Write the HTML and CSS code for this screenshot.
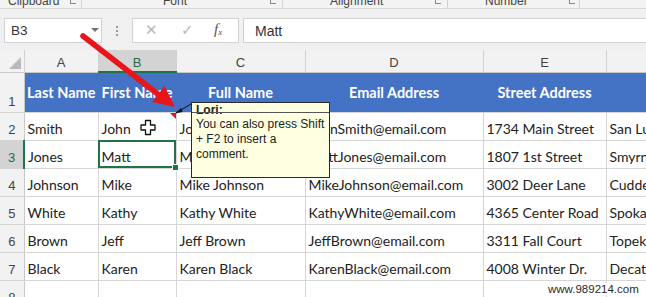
FILE: index.html
```html
<!DOCTYPE html>
<html>
<head>
<meta charset="utf-8">
<link rel="stylesheet" href="styles.css">
</head>
<body>
<div class="app">
  <div class="ribbon-labels">
    <div class="grp grp-clip"><span>Clipboard</span><i class="launch"></i></div>
    <div class="grp grp-font"><span>Font</span><i class="launch"></i></div>
    <div class="grp grp-align"><span>Alignment</span><i class="launch"></i></div>
    <div class="grp grp-num"><span>Number</span><i class="launch"></i></div>
  </div>
  <div class="formula-bar">
    <div class="name-box"><span>B3</span><i class="dd"></i></div>
    <div class="dots"><b></b><b></b><b></b></div>
    <div class="fx-buttons">
      <span class="fb-x">✕</span>
      <span class="fb-ok">✓</span>
      <span class="fb-fx">f<sub>x</sub></span>
    </div>
    <div class="formula-input">Matt</div>
  </div>
  <table class="sheet">
    <colgroup>
      <col class="c-hd"><col class="c-a"><col class="c-b"><col class="c-c"><col class="c-d"><col class="c-e"><col class="c-f">
    </colgroup>
    <tr class="r-colhd">
      <th class="corner"><i class="tri"></i></th>
      <th>A</th><th class="sel-col">B</th><th>C</th><th>D</th><th>E</th><th class="last"></th>
    </tr>
    <tr class="r-1">
      <th class="rh">1</th>
      <td>Last Name</td><td>First Name</td><td>Full Name</td><td>Email Address</td><td>Street Address</td><td></td>
    </tr>
    <tr class="r-d">
      <th class="rh">2</th>
      <td>Smith</td><td class="has-comment">John</td><td>John Smith</td><td>JohnSmith@email.com</td><td>1734 Main Street</td><td>San Luis</td>
    </tr>
    <tr class="r-d">
      <th class="rh sel-row">3</th>
      <td>Jones</td><td class="sel-cell">Matt</td><td>Matt Jones</td><td>MattJones@email.com</td><td>1807 1st Street</td><td>Smyrna</td>
    </tr>
    <tr class="r-d">
      <th class="rh">4</th>
      <td>Johnson</td><td>Mike</td><td>Mike Johnson</td><td>MikeJohnson@email.com</td><td>3002 Deer Lane</td><td>Cudderback</td>
    </tr>
    <tr class="r-d">
      <th class="rh">5</th>
      <td>White</td><td>Kathy</td><td>Kathy White</td><td>KathyWhite@email.com</td><td>4365 Center Road</td><td>Spokane</td>
    </tr>
    <tr class="r-d">
      <th class="rh">6</th>
      <td>Brown</td><td>Jeff</td><td>Jeff Brown</td><td>JeffBrown@email.com</td><td>3311 Fall Court</td><td>Topeka</td>
    </tr>
    <tr class="r-d">
      <th class="rh">7</th>
      <td>Black</td><td>Karen</td><td>Karen Black</td><td>KarenBlack@email.com</td><td>4008 Winter Dr.</td><td>Decatur</td>
    </tr>
    <tr class="r-d">
      <th class="rh">8</th>
      <td></td><td></td><td></td><td></td><td></td><td></td>
    </tr>
  </table>

  <div class="comment">
    <div class="comment-author">Lori:</div>
    <div class="comment-text">You can also press Shift<br>+ F2 to insert a<br>comment.</div>
  </div>

  <svg class="overlay" width="646" height="297" viewBox="0 0 646 297">
    <line x1="176" y1="113" x2="191" y2="104" stroke="#111" stroke-width="1"/>
    <polygon points="175,113.5 181,108 182.5,112" fill="#111"/>
    <line x1="83" y1="36" x2="159" y2="95" stroke="#e8161b" stroke-width="5.5" stroke-linecap="round"/>
    <polygon points="175,107 152,102 164.5,86" fill="#e8161b"/>
    <path d="M145.5 120.5 h5 v4.5 h4.5 v5 h-4.5 v4.5 h-5 v-4.5 h-4.5 v-5 h4.5 z" fill="#fff" stroke="#111" stroke-width="1.3" stroke-linejoin="round"/>
  </svg>

  <div class="watermark">www.989214.com</div>
</div>
</body>
</html>
```
FILE: styles.css
```css
* { box-sizing: border-box; }
html, body { margin: 0; padding: 0; }
body { width: 646px; height: 297px; overflow: hidden; background: #fff; font-family: Lato, "Liberation Sans", sans-serif; }

.app { position: relative; width: 646px; height: 297px; overflow: hidden; background: #fff; }

/* ribbon group labels (cut off at the top) */
.ribbon-labels {
  height: 9px;
  display: flex;
  background: #f3f3f3;
  border-bottom: 1px solid #d6d6d6;
  overflow: hidden;
  font-family: "Liberation Sans", sans-serif;
  font-size: 12px;
  color: #444;
}
.grp { position: relative; height: 8px; border-right: 1px solid #d2d2d2; }
.grp span { display: block; margin-top: -6px; line-height: 14px; }
.grp .launch { position: absolute; top: 0; width: 6px; height: 4px; border-left: 1px solid #888; border-bottom: 1px solid #888; }
.grp-clip { width: 82px; padding-left: 8px; }
.grp-clip .launch { left: 70px; }
.grp-font { width: 201px; padding-left: 81px; }
.grp-font .launch { left: 188px; }
.grp-align { width: 165px; padding-left: 47px; }
.grp-align .launch { left: 152px; }
.grp-num { width: 132px; padding-left: 37px; }
.grp-num .launch { left: 121px; }

/* formula bar */
.formula-bar {
  height: 41px;
  display: flex;
  align-items: flex-start;
  padding: 9px 0 0 4px;
  background: #f0f0f0;
}
.name-box {
  position: relative;
  width: 98px;
  height: 25px;
  background: #fff;
  border: 1px solid #d2d2d2;
  font-family: "Liberation Sans", sans-serif;
  font-size: 13.5px;
  color: #333;
  padding: 4px 0 0 6px;
}
.name-box .dd { position: absolute; left: 86px; top: 9px; width: 0; height: 0; border-left: 4px solid transparent; border-right: 4px solid transparent; border-top: 4px solid #777; }
.dots { width: 30px; height: 25px; display: flex; flex-direction: column; align-items: center; justify-content: center; gap: 2px; }
.dots b { width: 2px; height: 2px; background: #9a9a9a; }
.fx-buttons {
  width: 107px;
  height: 25px;
  background: #fff;
  border: 1px solid #d2d2d2;
  position: relative;
  color: #b8b8b8;
}
.fb-x { position: absolute; left: 12px; top: 2px; font-size: 15px; font-family: "DejaVu Sans", sans-serif; }
.fb-ok { position: absolute; left: 48px; top: 2px; font-size: 15px; font-family: "DejaVu Sans", sans-serif; }
.fb-fx { position: absolute; left: 81px; top: 2px; font-family: "Liberation Serif", serif; font-style: italic; font-size: 15px; color: #555; }
.fb-fx sub { font-size: 9px; vertical-align: -1px; }
.formula-input {
  margin-left: 4px;
  flex: 1;
  height: 25px;
  background: #fff;
  border: 1px solid #d2d2d2;
  border-right: none;
  font-family: "Liberation Sans", sans-serif;
  font-size: 14px;
  color: #333;
  padding: 4px 0 0 11px;
}

/* sheet */
.sheet {
  border-collapse: collapse;
  table-layout: fixed;
  width: 646px;
  font-size: 14px;
  color: #222;
}
.c-hd { width: 24px; }
.c-a { width: 74px; }
.c-b { width: 78px; }
.c-c { width: 129px; }
.c-d { width: 178px; }
.c-e { width: 123px; }
.c-f { width: 40px; }

.sheet td, .sheet th { padding: 0; overflow: hidden; white-space: nowrap; }

.r-colhd { height: 22px; }
.r-colhd th {
  background: #f2f2f2;
  border-right: 1px solid #d0d0d0;
  border-bottom: 1px solid #c8c8c8;
  font-family: "Liberation Sans", sans-serif;
  font-weight: normal;
  font-size: 13px;
  color: #444;
  text-align: center;
  vertical-align: middle;
  padding-top: 4px;
}
.r-colhd th.last { border-right: none; }
.r-colhd th.sel-col { background: #d3d3d3; color: #2a6b45; border-bottom: 2px solid #217346; }
.corner { position: relative; }
.corner .tri { position: absolute; right: 3px; bottom: 3px; width: 0; height: 0; border-left: 12px solid transparent; border-bottom: 12px solid #b9b9b9; }

.rh {
  background: #f2f2f2;
  border-right: 1px solid #c8c8c8;
  border-bottom: 1px solid #d6d6d6;
  font-family: "Liberation Sans", sans-serif;
  font-weight: normal;
  font-size: 13px;
  color: #444;
  text-align: center;
  vertical-align: bottom;
  padding-bottom: 3px !important;
}
.rh.sel-row { background: #d3d3d3; color: #2a6b45; border-right: 2px solid #217346; }

.r-1 { height: 40px; }
.r-1 td {
  background: #4472c4;
  color: #fff;
  font-weight: 700;
  text-align: center;
  vertical-align: middle;
  padding-top: 1px;
  font-size: 14.5px;
  border-bottom: 1px solid #d6d6d6;
}

.r-d { height: 28px; }
.r-d td {
  border-right: 1px solid #d6d6d6;
  border-bottom: 1px solid #d6d6d6;
  vertical-align: bottom;
  padding: 0 0 3px 3px;
}
.r-d td:last-child { border-right: none; }
.has-comment { position: relative; }
.has-comment::after { content: ""; position: absolute; right: 0; top: 0; border-top: 6px solid #e3131b; border-left: 6px solid transparent; }
.sel-cell { outline: 2px solid #217346; outline-offset: -2px; position: relative; }
.sel-cell::after { content: ""; position: absolute; right: -3px; bottom: -3px; width: 5px; height: 5px; background: #217346; border: 1px solid #fff; }
.sheet td.sel-cell { overflow: visible; }

/* comment popup */
.comment {
  position: absolute;
  left: 191px;
  top: 102px;
  width: 139px;
  height: 76px;
  background: #ffffe1;
  border: 1px solid #2a2a2a;
  padding: 0 0 0 4px;
  font-family: "Liberation Sans", sans-serif;
  font-size: 12px;
  line-height: 15px;
  color: #222;
  white-space: nowrap;
  overflow: hidden;
}
.comment-author { font-weight: bold; height: 14px; line-height: 14px; position: relative; }
.comment-author::after { content: ""; position: absolute; left: -4px; right: 0; top: 9px; border-top: 1px solid #555; }

.overlay { position: absolute; left: 0; top: 0; pointer-events: none; }

.watermark {
  position: absolute;
  left: 546px;
  top: 283px;
  font-family: "Liberation Sans", sans-serif;
  font-size: 11.5px;
  color: #2a2a2a;
  background: #fff;
  padding: 0 2px;
}
```
